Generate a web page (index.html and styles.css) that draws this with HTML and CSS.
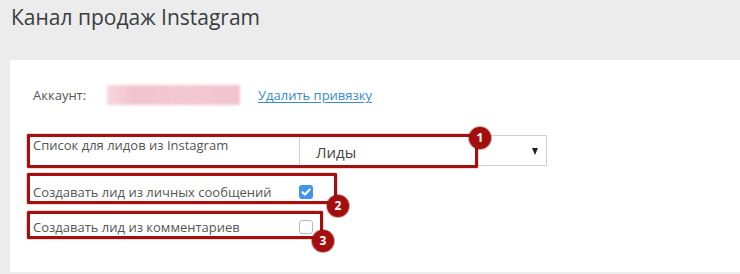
FILE: index.html
```html
<!DOCTYPE html>
<html lang="ru">
<head>
<meta charset="utf-8">
<title>Канал продаж Instagram</title>
<link rel="stylesheet" href="styles.css">
</head>
<body>
<header class="page-head">
  <h1 class="page-title">Канал продаж Instagram</h1>
</header>
<section class="panel">
  <div class="account-row">
    <span class="account-label">Аккаунт:</span>
    <span class="account-name"></span>
    <a class="unlink" href="#">Удалить привязку</a>
  </div>
  <div class="form">
    <div class="form-row form-row--select">
      <label class="form-label">Список для лидов из Instagram</label>
      <div class="select">
        <span class="select-value">Лиды</span>
        <span class="select-arrow"></span>
      </div>
    </div>
    <div class="form-row form-row--check">
      <label class="form-label">Создавать лид из личных сообщений</label>
      <span class="checkbox checkbox--on">
        <svg viewBox="0 0 14 14" width="14" height="14"><path d="M3.4 7.2 L5.9 9.6 L10.7 4.6" fill="none" stroke="#fff" stroke-width="2.1" stroke-linecap="round" stroke-linejoin="round"/></svg>
      </span>
    </div>
    <div class="form-row form-row--check">
      <label class="form-label">Создавать лид из комментариев</label>
      <span class="checkbox"></span>
    </div>
  </div>
  <div class="note note--1"></div>
  <div class="note note--2"></div>
  <div class="note note--3"></div>
  <span class="badge badge--1">1</span>
  <span class="badge badge--2">2</span>
  <span class="badge badge--3">3</span>
</section>
</body>
</html>
```
FILE: styles.css
```css
html, body {
  margin: 0;
  padding: 0;
}
body {
  background: #ececec;
  font-family: "Open Sans", "Noto Sans", sans-serif;
  width: 740px;
  height: 274px;
  overflow: hidden;
}
.page-head {
  height: 60px;
  box-sizing: border-box;
  padding: 3px 0 0 11px;
}
.page-title {
  margin: 0;
  font-size: 21px;
  line-height: 28px;
  font-weight: 400;
  color: #3a3d40;
}
.panel {
  position: relative;
  margin-left: 10px;
  background: #fff;
  height: 212px;
  box-sizing: border-box;
  padding: 24px 0 28px 23px;
}
.account-row {
  display: flex;
  align-items: center;
  height: 22px;
  font-size: 13px;
  line-height: 22px;
}
.account-label {
  color: #555;
  width: 74px;
}
.account-name {
  width: 133px;
  height: 20px;
  background: linear-gradient(90deg, #f6d6df 0%, #f1c3d1 20%, #f3c8d5 60%, #f0c2d0 100%);
  filter: blur(1.5px);
  margin-right: 18px;
}
.unlink {
  color: #3a8bc6;
  text-decoration: underline;
  text-underline-offset: 2px;
}
.form {
  margin-top: 29px;
}
.form-row {
  display: flex;
}
.form-label {
  width: 266px;
  font-size: 13px;
  line-height: 18px;
  color: #555;
}
.form-row--select {
  height: 31px;
  align-items: flex-start;
}
.form-row--select .form-label {
  padding-top: 1px;
}
.form-row--check {
  height: 35px;
  align-items: center;
}
.form-row--select + .form-row--check {
  margin-top: 8px;
}
.select {
  position: relative;
  width: 248px;
  height: 31px;
  box-sizing: border-box;
  border: 1px solid #cfcfcf;
  padding: 7px 0 4px 16px;
  font-size: 15px;
  line-height: 18px;
  color: #444;
}
.select-arrow {
  position: absolute;
  right: 8px;
  top: 12px;
  width: 0;
  height: 0;
  border-left: 3.5px solid transparent;
  border-right: 3.5px solid transparent;
  border-top: 7px solid #222;
}
.checkbox {
  display: block;
  width: 14px;
  height: 14px;
  box-sizing: border-box;
  border: 1px solid #b9b9b9;
  border-radius: 3px;
  background: #fff;
}
.checkbox--on {
  border: none;
  background: #3f95ea;
}
.checkbox svg {
  display: block;
}
.note {
  position: absolute;
  box-sizing: border-box;
  border: 3px solid #a5100f;
  box-shadow: 0 0 0 0.5px rgba(165, 16, 15, 0.35);
  border-radius: 1px;
}
.note--1 { left: 17px; top: 74px; width: 451px; height: 34px; }
.note--2 { left: 17px; top: 113px; width: 310px; height: 31px; }
.note--3 { left: 17px; top: 151px; width: 296px; height: 28px; }
.badge {
  position: absolute;
  width: 22px;
  height: 22px;
  border-radius: 50%;
  background: #a30e0e;
  box-shadow: 0 0 0 1px rgba(110, 0, 0, 0.35);
  color: #fff;
  font-size: 12px;
  font-weight: 700;
  line-height: 22px;
  text-align: center;
}
.badge--1 { left: 459px; top: 67px; }
.badge--2 { left: 317px; top: 135px; }
.badge--3 { left: 302px; top: 170px; }
```
